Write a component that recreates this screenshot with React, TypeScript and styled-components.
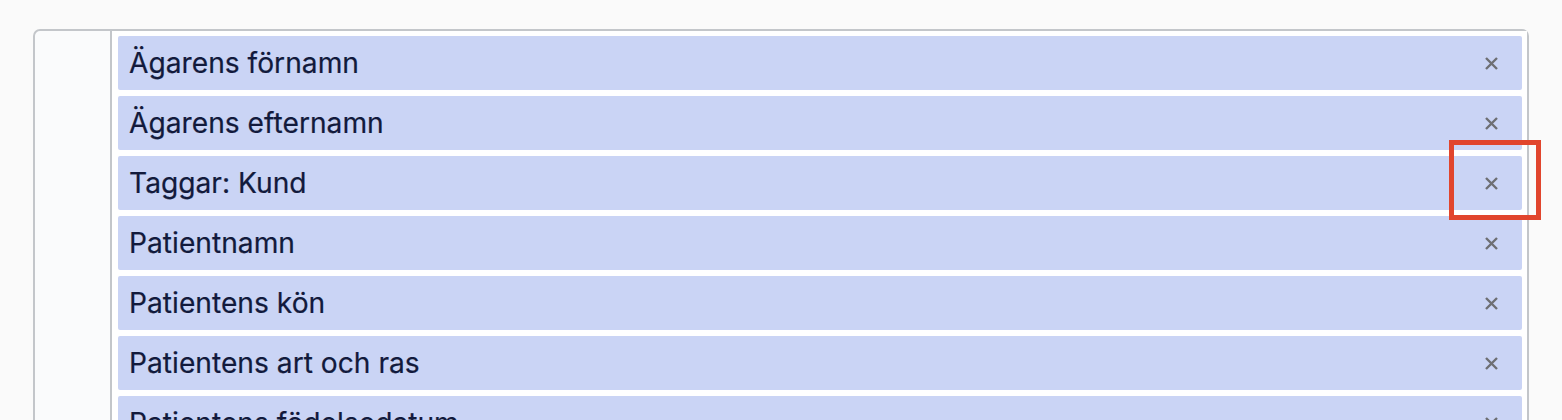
import React from "react";
import styled, { createGlobalStyle } from "styled-components";

const GlobalStyle = createGlobalStyle`
  html, body {
    margin: 0;
    padding: 0;
    background: #fafafa;
    font-family: Inter, "Noto Sans", sans-serif;
  }
`;

const fields = [
  "Ägarens förnamn",
  "Ägarens efternamn",
  "Taggar: Kund",
  "Patientnamn",
  "Patientens kön",
  "Patientens art och ras",
  "Patientens födelsedatum",
];

const Page = styled.div`
  position: relative;
  height: 420px;
  overflow: hidden;
  padding: 29px 33px 0 33px;
  box-sizing: border-box;
`;

const Box = styled.div`
  display: flex;
  width: 1496px;
  min-height: 500px;
  border: 2px solid #c3c6ca;
  border-radius: 7px;
  background: #fafbfc;
  box-sizing: border-box;
`;

const Gutter = styled.div`
  width: 75px;
  flex-shrink: 0;
  border-right: 2px solid #c3c6ca;
`;

const List = styled.div`
  flex: 1;
  display: flex;
  flex-direction: column;
  gap: 6px;
  padding: 5px 5px 0 6px;
  background: #ffffff;
`;

const Row = styled.div`
  display: flex;
  align-items: center;
  justify-content: space-between;
  height: 54px;
  padding: 1px 24px 0 11px;
  box-sizing: border-box;
  background: #cad4f5;
  border-radius: 2px;
  color: #121a3c;
  font-size: 28.2px;
  line-height: 1;
  -webkit-text-stroke: 0.2px #121a3c;
`;

const Remove = styled.button`
  display: flex;
  align-items: center;
  justify-content: center;
  width: 14px;
  height: 14px;
  padding: 0;
  border: none;
  background: none;
  cursor: pointer;
`;

const Highlight = styled.div`
  position: absolute;
  left: 1449px;
  top: 140px;
  width: 92px;
  height: 80px;
  border: 5px solid #e1452d;
  box-sizing: border-box;
  pointer-events: none;
`;

const CloseIcon = () => (
  <svg width="13" height="13" viewBox="0 0 13 13">
    <path d="M1 1 L12 12 M12 1 L1 12" stroke="#6e6f73" strokeWidth="2.4" />
  </svg>
);

export default function App() {
  return (
    <>
      <GlobalStyle />
      <Page>
        <Box>
          <Gutter />
          <List>
            {fields.map((f) => (
              <Row key={f}>
                <span>{f}</span>
                <Remove aria-label="Ta bort">
                  <CloseIcon />
                </Remove>
              </Row>
            ))}
          </List>
        </Box>
        <Highlight />
      </Page>
    </>
  );
}
